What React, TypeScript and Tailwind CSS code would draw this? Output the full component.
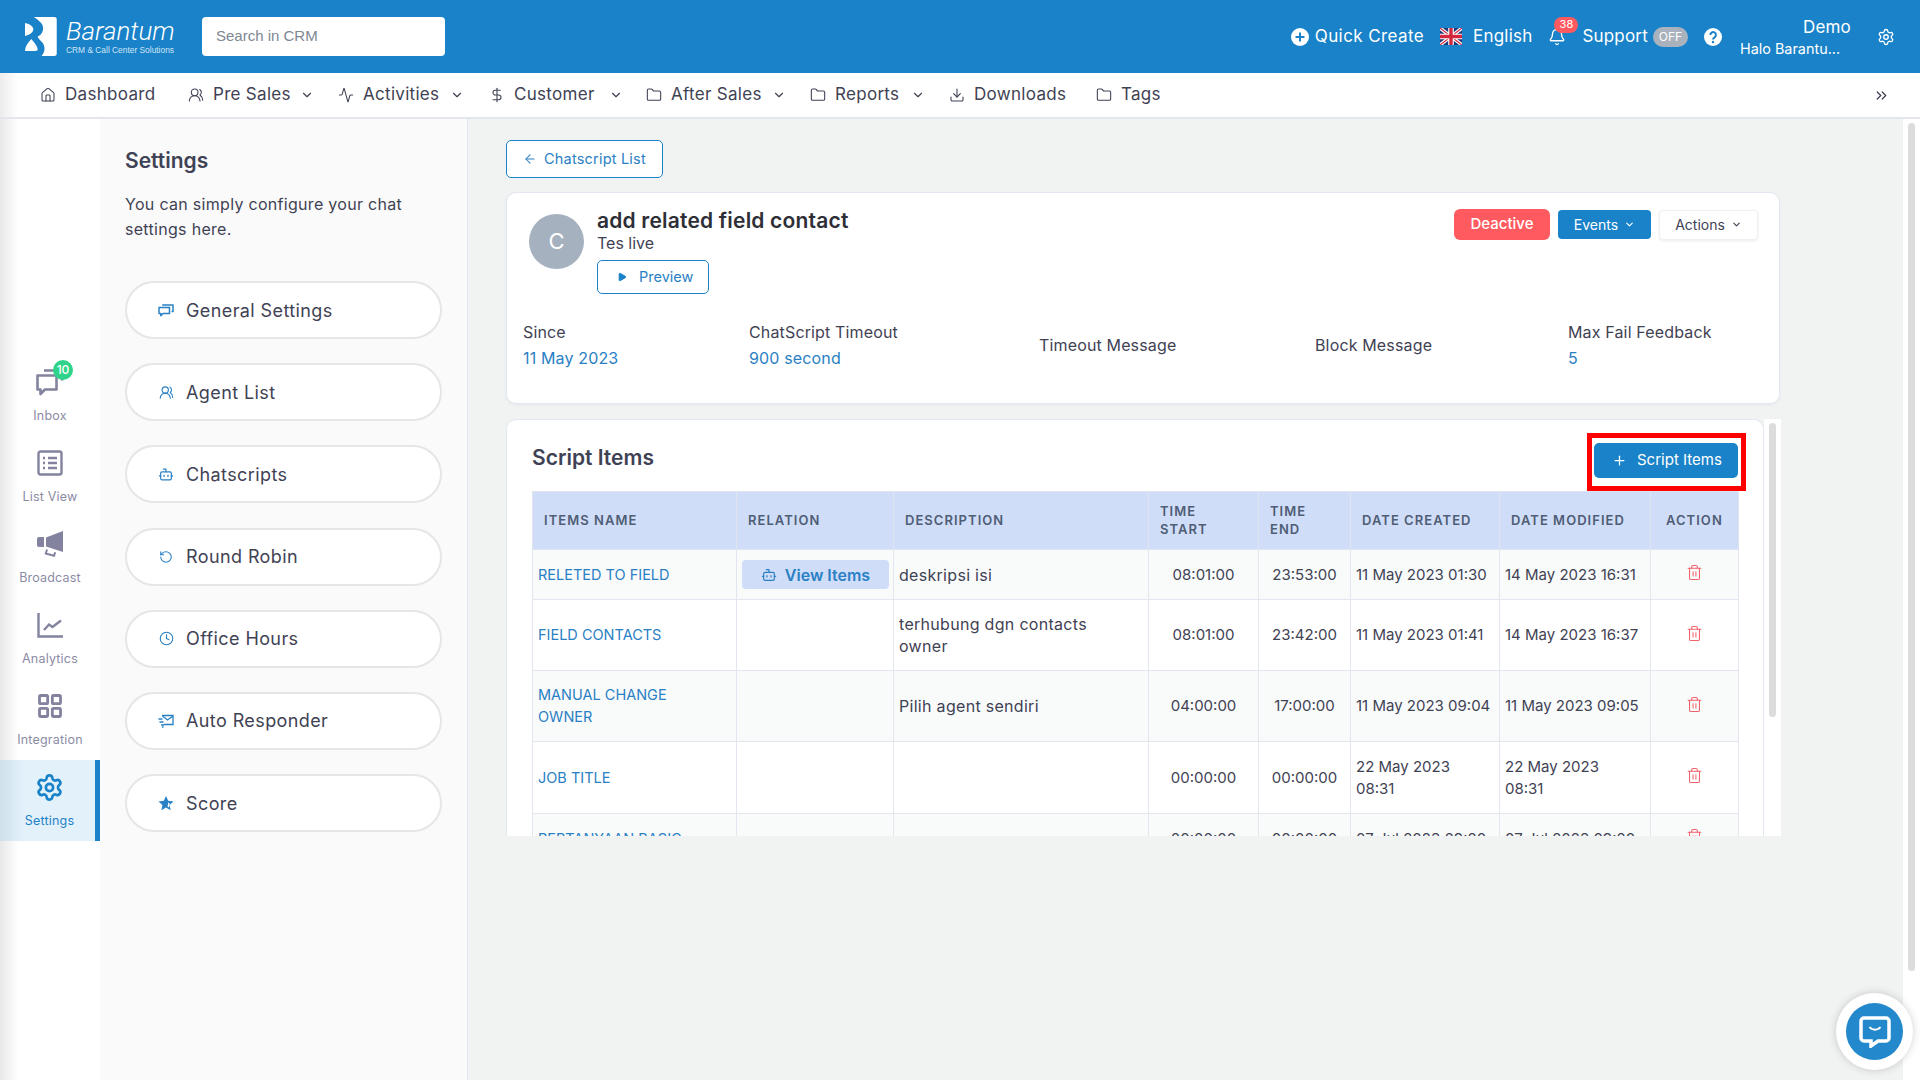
import {
  Activity,
  ArrowLeft,
  Bell,
  Bot,
  ChevronDown,
  ChevronsRight,
  Clock,
  DollarSign,
  Download,
  Folder,
  House,
  LayoutGrid,
  Play,
  Plus,
  RotateCw,
  Settings,
  Trash2,
  UsersRound,
} from "lucide-react"
import type { ReactNode } from "react"

const navItems = [
  { label: "Dashboard", icon: <House size={16} strokeWidth={1.6} />, width: "w-[93px]", caret: false, before: "" },
  { label: "Pre Sales", icon: <UsersRound size={16} strokeWidth={1.6} />, width: "w-[75px]", caret: true, before: "ml-[30px]" },
  { label: "Activities", icon: <Activity size={16} strokeWidth={1.6} />, width: "w-[75px]", caret: true, before: "ml-[24px]" },
  { label: "Customer", icon: <DollarSign size={16} strokeWidth={1.6} />, width: "w-[83px]", caret: true, before: "ml-[25px]" },
  { label: "After Sales", icon: <Folder size={16} strokeWidth={1.6} />, width: "w-[89px]", caret: true, before: "ml-[23px]" },
  { label: "Reports", icon: <Folder size={16} strokeWidth={1.6} />, width: "w-[64px]", caret: true, before: "ml-[24px]" },
  { label: "Downloads", icon: <Download size={16} strokeWidth={1.6} />, width: "w-[94px]", caret: false, before: "ml-[24px]" },
  { label: "Tags", icon: <Folder size={16} strokeWidth={1.6} />, width: "w-[40px]", caret: false, before: "ml-[28px]" },
]

const settingsLinks = [
  { label: "General Settings", icon: <GeneralIcon /> },
  { label: "Agent List", icon: <UsersRound size={15} strokeWidth={1.8} /> },
  { label: "Chatscripts", icon: <Bot size={17} strokeWidth={1.8} /> },
  { label: "Round Robin", icon: <RotateCw size={14} strokeWidth={1.8} className="-scale-x-100" /> },
  { label: "Office Hours", icon: <Clock size={15} strokeWidth={1.8} /> },
  { label: "Auto Responder", icon: <ResponderIcon /> },
  { label: "Score", icon: <ScoreIcon /> },
]

const rows = [
  {
    name: "RELETED TO FIELD",
    relation: true,
    description: "deskripsi isi",
    start: "08:01:00",
    end: "23:53:00",
    created: "11 May 2023 01:30",
    modified: "14 May 2023 16:31",
    height: "h-[50px]",
    tint: "bg-[#f9fbfb]",
  },
  {
    name: "FIELD CONTACTS",
    relation: false,
    description: "terhubung dgn contacts owner",
    start: "08:01:00",
    end: "23:42:00",
    created: "11 May 2023 01:41",
    modified: "14 May 2023 16:37",
    height: "h-[71px]",
    tint: "bg-white",
  },
  {
    name: "MANUAL CHANGE OWNER",
    relation: false,
    description: "Pilih agent sendiri",
    start: "04:00:00",
    end: "17:00:00",
    created: "11 May 2023 09:04",
    modified: "11 May 2023 09:05",
    height: "h-[71px]",
    tint: "bg-[#f9fbfb]",
  },
  {
    name: "JOB TITLE",
    relation: false,
    description: "",
    start: "00:00:00",
    end: "00:00:00",
    created: "22 May 2023\n08:31",
    modified: "22 May 2023\n08:31",
    height: "h-[72px]",
    tint: "bg-white",
  },
  {
    name: "PERTANYAAN BASIC",
    relation: false,
    description: "",
    start: "00:00:00",
    end: "00:00:00",
    created: "07 Jul 2023 09:20",
    modified: "07 Jul 2023 09:20",
    height: "h-[50px]",
    tint: "bg-[#f9fbfb]",
  },
]

function GeneralIcon() {
  return (
    <svg width="16" height="14" viewBox="0 0 16 14" fill="none" stroke="currentColor" strokeWidth="1.5" strokeLinejoin="round">
      <path d="M1 4.500h10.500v6H5L2.800 12.800V10.500H1z" />
      <path d="M4.200 2h10.800v6.500h-1.400" />
    </svg>
  )
}

function ResponderIcon() {
  return (
    <svg width="16" height="14" viewBox="0 0 16 14" fill="none" stroke="currentColor" strokeWidth="1.3">
      <path d="M4 1.500h11v9H6" />
      <path d="M4.500 2l5 4 5.500-4" />
      <path d="M0.500 5h4M1.500 8h4M3 11h3M4 13h1.500" />
    </svg>
  )
}

function ScoreIcon() {
  return (
    <svg width="16" height="15" viewBox="0 0 16 15" fill="currentColor">
      <path d="M8 0l2.200 4.800 5.300.6-3.900 3.600 1 5.200L8 11.600 3.400 14.200l1-5.200L.5 5.400l5.300-.6z" />
      <path d="M10.500 6.200l1.100 1.200-.5 4-1.600-1z" fill="#fff" />
    </svg>
  )
}

function Logo() {
  return (
    <svg width="33" height="39" viewBox="0 0 26 39" preserveAspectRatio="none" fill="#fff">
      <path d="M7 0H23a2 2 0 0 1 2 2V37a2 2 0 0 1-2 2H13C16 35 16 30 14 26 12 23 10 21 10 19.500 13 18 15 14 14 9 13 5 10 3 7 0Z" />
      <path d="M0 6C4 7 7 10 6.500 13 6 16 3 18 0 19Z" />
      <path d="M5 22C7 25 10 29 10 33 10 34 8 34 0 34 0 30 2 26 5 22Z" />
    </svg>
  )
}

function Flag() {
  return (
    <svg width="22" height="17" viewBox="0 0 22 17">
      <rect width="22" height="17" fill="#1f3a7a" />
      <path d="M0 0L22 17M22 0L0 17" stroke="#fff" strokeWidth="3.400" />
      <path d="M0 0L22 17M22 0L0 17" stroke="#d3273e" strokeWidth="1.200" />
      <path d="M11 0V17M0 8.500H22" stroke="#fff" strokeWidth="5.600" />
      <path d="M11 0V17M0 8.500H22" stroke="#d3273e" strokeWidth="3.400" />
    </svg>
  )
}

function InboxIcon() {
  return (
    <svg width="28" height="27" viewBox="0 0 28 27" fill="none" stroke="#83839f" strokeWidth="2.600" strokeLinejoin="round">
      <path d="M1.500 6.500h19v14H9l-4.500 4.500v-4.500h-3z" />
      <path d="M8 1.500h14M26 10v1.500" />
    </svg>
  )
}

function ListViewIcon() {
  return (
    <svg width="26" height="26" viewBox="0 0 26 26" fill="none" stroke="#83839f" strokeWidth="2.400">
      <rect x="1.500" y="1.500" width="23" height="23" rx="2" />
      <path d="M6 8h2M11 8h9M6 13h2M11 13h9M6 18h2M11 18h9" />
    </svg>
  )
}

function BroadcastIcon() {
  return (
    <svg width="26" height="26" viewBox="0 0 26 26" fill="#83839f">
      <path d="M26 0V21L9 15.500V6.500Z" />
      <path d="M0 8a2 2 0 0 1 2-2h5v10H2a2 2 0 0 1-2-2z" />
      <path d="M10 18.500l-1.200 4 8.200 2.300 1.200-3.600" fill="none" stroke="#83839f" strokeWidth="2" />
    </svg>
  )
}

function AnalyticsIcon() {
  return (
    <svg width="26" height="25" viewBox="0 0 26 25" fill="none" stroke="#83839f" strokeWidth="2.400">
      <path d="M1.500 0v23.500H26" />
      <path d="M7 17l5-5.500 3.500 2.500L24 7.500" />
    </svg>
  )
}

function SideItem({ label, icon, active, badge }: { label: string; icon: ReactNode; active?: boolean; badge?: boolean }) {
  return (
    <div
      className={`relative flex h-[81px] flex-col items-center pt-[12px] ${
        active ? "border-r-[5px] border-[#1a82c8] bg-[linear-gradient(to_right,#cfe0ea,#e3f1fb_24px)] pl-[4px]" : ""
      }`}
    >
      <div className="relative flex h-[30px] w-[30px] items-center justify-center">
        {icon}
        {badge && (
          <span className="absolute -right-[8px] -top-[7px] flex h-[20px] w-[20px] items-center justify-center rounded-full bg-[#2fd38a] text-[12px] font-medium text-white">
            10
          </span>
        )}
      </div>
      <span className={`mt-[10px] text-[12.500px] leading-[18px] tracking-[0.2px] ${active ? "text-[#1f82c8]" : "text-[#8b8ba5]"}`}>
        {label}
      </span>
    </div>
  )
}

function Stat({ label, value }: { label: string; value?: string }) {
  return (
    <div className="text-[16px] leading-[25.500px] tracking-[0.15px] text-[#3f4254]">
      <div>{label}</div>
      {value && <div className="text-[#2a80c4]">{value}</div>}
    </div>
  )
}

export default function App() {
  return (
    <div className="flex h-[1080px] w-[1920px] flex-col overflow-hidden bg-white font-[Inter,sans-serif] text-[#3f4254]">
      <header className="flex h-[73px] shrink-0 items-center bg-[#1a82c8] pl-[25px] text-white">
        <Logo />
        <div className="ml-[8px] w-[110px]">
          <div className="font-[Roboto,sans-serif] text-[26px] font-light italic leading-[27px]">Barantum</div>
          <div className="mt-[1px] whitespace-nowrap font-['Liberation_Sans',sans-serif] text-[8.400px] leading-[9px] text-[#cfe5f5]">
            CRM &amp; Call Center Solutions
          </div>
        </div>
        <div className="ml-[26px] flex h-[39px] w-[243px] items-center rounded-[4px] bg-white pl-[14px] font-['Liberation_Sans',sans-serif] text-[15px] text-[#7e8792]">
          Search in CRM
        </div>

        <div className="ml-auto flex items-center pr-[25px] text-[17px] tracking-[0.2px]">
          <svg width="18" height="18" viewBox="0 0 18 18">
            <circle cx="9" cy="9" r="9" fill="#fff" />
            <path d="M9 4.500v9M4.500 9h9" stroke="#1a82c8" strokeWidth="2" />
          </svg>
          <span className="ml-[6px] tracking-[0.4px]">Quick Create</span>
          <div className="ml-[16px]">
            <Flag />
          </div>
          <span className="ml-[11px]">English</span>
          <div className="relative ml-[16px]">
            <Bell size={18} strokeWidth={1.8} />
            <span className="absolute -right-[12px] -top-[11px] flex h-[16px] w-[24px] items-center justify-center rounded-full bg-[#ff5a5f] text-[11px]">
              38
            </span>
          </div>
          <span className="ml-[16px]">Support</span>
          <span className="ml-[5px] flex h-[20px] w-[35px] items-center justify-center rounded-full bg-[#a9b2bd] text-[12px] tracking-normal">
            OFF
          </span>
          <svg width="18" height="18" viewBox="0 0 18 18" className="ml-[16px]">
            <circle cx="9" cy="9" r="9" fill="#fff" />
            <path d="M6.300 7a2.800 2.800 0 1 1 4.300 2.300c-1 .6-1.600 1.100-1.600 2.200" fill="none" stroke="#1a82c8" strokeWidth="2" />
            <circle cx="9" cy="14" r="1.200" fill="#1a82c8" />
          </svg>
          <div className="ml-[18px] w-[111px]">
            <div className="text-right text-[17px] leading-[24px]">Demo</div>
            <div className="whitespace-nowrap text-[14.400px] leading-[20px] tracking-normal">Halo Barantu...</div>
          </div>
          <Settings size={18} strokeWidth={1.8} className="ml-[26px]" />
        </div>
      </header>

      <nav className="flex h-[46px] shrink-0 items-center border-b-2 border-[#e4e6ef] bg-[linear-gradient(to_right,#ececec,#fff_18px)] pl-[40px] pr-[30px] text-[17px] tracking-[0.3px] text-[#3f4254]">
        {navItems.map((item) => (
          <div key={item.label} className={`flex items-center ${item.before}`}>
            <span className="flex w-[16px] justify-center">{item.icon}</span>
            <span className={`ml-[9px] whitespace-nowrap ${item.width}`}>{item.label}</span>
            {item.caret && <ChevronDown size={14} strokeWidth={2} className="ml-[12px]" />}
          </div>
        ))}
        <ChevronsRight size={17} strokeWidth={1.8} className="ml-auto" />
      </nav>

      <div className="flex min-h-0 flex-1">
        <aside className="w-[100px] shrink-0 bg-[linear-gradient(to_right,#e8e8e8,#fff_18px)] pt-[236px]">
          <SideItem label="Inbox" icon={<InboxIcon />} badge />
          <SideItem label="List View" icon={<ListViewIcon />} />
          <SideItem label="Broadcast" icon={<BroadcastIcon />} />
          <SideItem label="Analytics" icon={<AnalyticsIcon />} />
          <SideItem label="Integration" icon={<LayoutGrid size={28} strokeWidth={2.400} color="#83839f" />} />
          <SideItem label="Settings" icon={<Settings size={29} strokeWidth={2.200} color="#1a82c8" />} active />
        </aside>

        <section className="w-[368px] shrink-0 border-r border-[#e4e6ef] bg-[#fafafa] pl-[25px] pr-[25px] pt-[29px]">
          <h2 className="text-[21px] font-semibold leading-[26px] text-[#3f4254]">Settings</h2>
          <p className="mt-[18px] text-[16px] leading-[24.500px] tracking-[0.3px] text-[#3f4254]">
            You can simply configure your chat settings here.
          </p>
          <div className="mt-[40px] flex flex-col gap-[24.200px]">
            {settingsLinks.map((link) => (
              <div
                key={link.label}
                className="flex h-[58px] items-center rounded-full border-2 border-[#e4e6e8] bg-white pl-[31px] text-[18px] tracking-[0.4px] text-[#3f4254]"
              >
                <span className="flex w-[16px] justify-center text-[#2a80c4]">{link.icon}</span>
                <span className="ml-[12px]">{link.label}</span>
              </div>
            ))}
          </div>
        </section>

        <main className="relative flex min-w-0 flex-1 bg-[#f1f3f3]">
          <div className="w-[1312px] shrink-0 pl-[38px] pt-[21px]">
            <div className="flex h-[38px] w-[157px] items-center rounded-[5px] border border-[#1a82c8] bg-white pl-[16px] text-[14.500px] tracking-[0.2px] text-[#2a80c4]">
              <ArrowLeft size={14} strokeWidth={1.8} />
              <span className="ml-[7px]">Chatscript List</span>
            </div>

            <div className="mt-[14px] h-[212px] w-[1274px] rounded-[10px] border border-[#e3e8f0] bg-white pl-[16px] pr-[21px] pt-[16px] shadow-[0_1px_3px_rgba(60,80,110,0.08)]">
              <div className="flex h-[104px] items-start">
                <div className="ml-[6px] mt-[5px] flex h-[55px] w-[55px] items-center justify-center rounded-full bg-[#a6b1bf] text-[22px] text-white">
                  C
                </div>
                <div className="ml-[13px]">
                  <div className="text-[21px] font-semibold leading-[24px] tracking-[0.2px] text-[#2e2e36]">add related field contact</div>
                  <div className="-mt-[1px] text-[16px] leading-[22px]">Tes live</div>
                  <div className="mt-[6px] flex h-[34px] w-[112px] items-center rounded-[5px] border border-[#1a82c8] pl-[19px] text-[14.500px] text-[#2a80c4]">
                    <Play size={10} fill="#1a82c8" stroke="#1a82c8" />
                    <span className="ml-[12px]">Preview</span>
                  </div>
                </div>
                <div className="ml-auto flex items-center">
                  <div className="flex h-[31px] w-[96px] items-center justify-center rounded-[6px] bg-[#ff5a5f] text-[15px] font-medium text-white">
                    Deactive
                  </div>
                  <div className="ml-[8px] flex h-[29px] w-[93px] items-center justify-center rounded-[4px] bg-[#1a82c8] text-[14px] text-white">
                    Events
                    <ChevronDown size={11} strokeWidth={2.500} className="ml-[6px]" />
                  </div>
                  <div className="ml-[8px] flex h-[30px] w-[99px] items-center justify-center rounded-[4px] border border-[#eef0f3] bg-white text-[14px] shadow-[0_1px_3px_rgba(0,0,0,0.08)]">
                    Actions
                    <ChevronDown size={11} strokeWidth={2.500} className="ml-[6px]" />
                  </div>
                </div>
              </div>
              <div className="mt-[7px] grid grid-cols-[226px_290px_276px_253px_1fr] items-center">
                <Stat label="Since" value="11 May 2023" />
                <Stat label="ChatScript Timeout" value="900 second" />
                <Stat label="Timeout Message" />
                <Stat label="Block Message" />
                <Stat label="Max Fail Feedback" value="5" />
              </div>
            </div>

            <div className="mt-[15px] flex h-[417px] w-[1275px] overflow-hidden">
              <div className="w-[1258px] shrink-0 rounded-t-[10px] border border-b-0 border-[#e3e8f0] bg-white pl-[25px] pr-[25px]">
                <div className="flex h-[71px] items-start justify-between">
                  <h3 className="mt-[25px] text-[21px] font-semibold leading-[26px] text-[#3f4254]">Script Items</h3>
                  <div className="-mr-[8px] mt-[13px] h-[58px] w-[159px] border-[5px] border-[#ff0000] pl-[2px] pt-[5px]">
                    <div className="flex h-[35px] w-[144px] items-center rounded-[5px] bg-[#1a82c8] pl-[18px] text-[15px] text-white">
                      <Plus size={15} strokeWidth={2} />
                      <span className="ml-[10px]">Script Items</span>
                    </div>
                  </div>
                </div>
                <table className="w-[1206px] table-fixed border-collapse">
                  <colgroup>
                    <col className="w-[204px]" />
                    <col className="w-[157px]" />
                    <col className="w-[255px]" />
                    <col className="w-[110px]" />
                    <col className="w-[92px]" />
                    <col className="w-[149px]" />
                    <col className="w-[151px]" />
                    <col className="w-[88px]" />
                  </colgroup>
                  <thead>
                    <tr className="h-[58px] bg-[#cfddf9] text-left text-[13px] font-semibold leading-[18px] tracking-[0.08em] text-[#4f5d75]">
                      <th className="border border-[#dfe5ef] pb-[2px] pl-[11px] font-semibold">ITEMS NAME</th>
                      <th className="border border-[#dfe5ef] pb-[2px] pl-[11px] font-semibold">RELATION</th>
                      <th className="border border-[#dfe5ef] pb-[2px] pl-[11px] font-semibold">DESCRIPTION</th>
                      <th className="border border-[#dfe5ef] pb-[2px] pl-[11px] pr-[30px] font-semibold">TIME START</th>
                      <th className="border border-[#dfe5ef] pb-[2px] pl-[11px] pr-[30px] font-semibold">TIME END</th>
                      <th className="border border-[#dfe5ef] pb-[2px] pl-[11px] font-semibold">DATE CREATED</th>
                      <th className="border border-[#dfe5ef] pb-[2px] pl-[11px] font-semibold">DATE MODIFIED</th>
                      <th className="border border-[#dfe5ef] pb-[2px] pl-[15px] font-semibold">ACTION</th>
                    </tr>
                  </thead>
                  <tbody className="text-[15px] leading-[22px]">
                    {rows.map((row) => (
                      <tr key={row.name} className={`${row.height} ${row.tint}`}>
                        <td className="border border-[#e4e6ef] pl-[5px] pr-[40px] text-[14.500px] text-[#2a80c4]">{row.name}</td>
                        <td className="border border-[#e4e6ef] px-[5px]">
                          {row.relation && (
                            <div className="flex h-[29px] w-[147px] items-center justify-center rounded-[4px] bg-[#cfddf9] text-[16px] font-semibold text-[#2a80c4]">
                              <Bot size={16} strokeWidth={1.800} />
                              <span className="ml-[8px]">View Items</span>
                            </div>
                          )}
                        </td>
                        <td className="border border-[#e4e6ef] pl-[5px] pr-[30px] text-[16px] tracking-[0.3px]">{row.description}</td>
                        <td className="border border-[#e4e6ef] text-center">{row.start}</td>
                        <td className="border border-[#e4e6ef] text-center">{row.end}</td>
                        <td className="whitespace-pre border border-[#e4e6ef] px-[5px]">{row.created}</td>
                        <td className="whitespace-pre border border-[#e4e6ef] px-[5px]">{row.modified}</td>
                        <td className="border border-[#e4e6ef]">
                          <Trash2 size={17} strokeWidth={1.500} color="#f1636b" className="mx-auto -mt-[4px]" />
                        </td>
                      </tr>
                    ))}
                  </tbody>
                </table>
              </div>
              <div className="w-[17px] shrink-0 bg-white pt-[4px]">
                <div className="ml-[5px] h-[294px] w-[7px] rounded-full bg-[#dcdcdc]" />
              </div>
            </div>
          </div>

          <div className="ml-auto w-[17px] bg-white pl-[5px] pt-[4px]">
            <div className="h-[848px] w-[7px] rounded-full bg-[#dcdcdc]" />
          </div>

          <div className="absolute bottom-[10px] right-[7px] flex h-[77px] w-[77px] items-center justify-center rounded-full bg-white shadow-[0_0_8px_rgba(0,0,0,0.18)]">
            <div className="flex h-[57px] w-[57px] items-center justify-center rounded-full bg-[#2389cc]">
              <svg width="32" height="32" viewBox="0 0 32 32" fill="none">
                <path d="M5 2h22a3 3 0 0 1 3 3v17a3 3 0 0 1-3 3H19l-7 5v-5H5a3 3 0 0 1-3-3V5a3 3 0 0 1 3-3z" stroke="#fff" strokeWidth="3.500" />
                <path d="M10.500 11c2.500 3.500 8.500 3.500 11 0" stroke="#fff" strokeWidth="2" />
              </svg>
            </div>
          </div>
        </main>
      </div>
    </div>
  )
}
